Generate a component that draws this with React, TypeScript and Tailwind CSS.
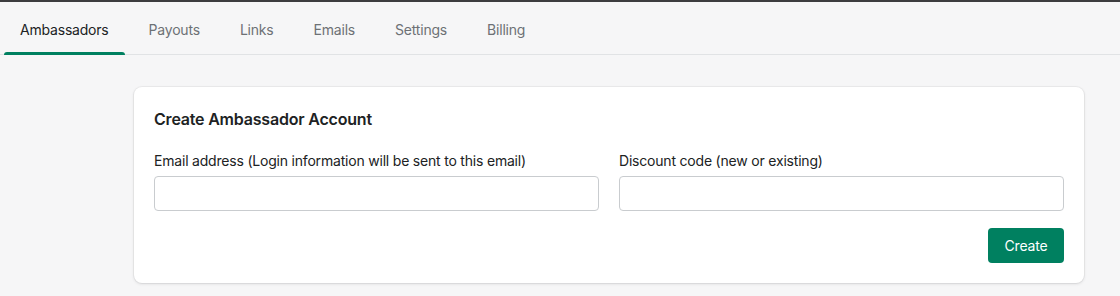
import { useState } from "react";

const TABS = ["Ambassadors", "Payouts", "Links", "Emails", "Settings", "Billing"];

export default function App() {
  const [active, setActive] = useState("Ambassadors");
  const [email, setEmail] = useState("");
  const [code, setCode] = useState("");

  return (
    <div
      className="min-h-[296px] w-[1120px] bg-[#f6f6f7] border-t-2 border-[#3d3d3f] text-[#202223] tracking-[-0.2px]"
      style={{ fontFamily: "Inter, 'Noto Sans', sans-serif" }}
    >
      {/* ── Tabs ── */}
      <div className="flex gap-2 pl-1 border-b border-[#e1e3e5] h-[53px]">
        {TABS.map((tab) => (
          <button
            key={tab}
            onClick={() => setActive(tab)}
            className={
              "relative px-4 pt-1 text-sm leading-none " +
              (active === tab ? "text-[#202223]" : "text-[#6d7175]")
            }
          >
            {tab}
            {active === tab && (
              <span className="absolute left-0 right-0 -bottom-px h-[3px] rounded-t bg-[#008060]" />
            )}
          </button>
        ))}
      </div>

      {/* ── Card ── */}
      <div className="pl-[134px] pr-[36px] pt-[32px]">
        <div className="bg-white rounded-lg shadow-[0_0_0_1px_rgba(63,63,68,0.05),0_1px_3px_0_rgba(63,63,68,0.15)] px-5 pt-[22px] pb-5">
          <h2 className="text-base font-semibold leading-5">Create Ambassador Account</h2>

          <div className="grid grid-cols-2 gap-5 mt-[22px]">
            <label className="flex flex-col">
              <span className="text-sm leading-5 mb-[5px]">Email address (Login information will be sent to this email)</span>
              <input
                value={email}
                onChange={(e) => setEmail(e.target.value)}
                className="h-[35px] rounded border border-[#c9cccf] px-3 text-sm outline-none"
              />
            </label>
            <label className="flex flex-col">
              <span className="text-sm leading-5 mb-[5px]">Discount code (new or existing)</span>
              <input
                value={code}
                onChange={(e) => setCode(e.target.value)}
                className="h-[35px] rounded border border-[#c9cccf] px-3 text-sm outline-none"
              />
            </label>
          </div>

          <div className="flex justify-end mt-[17px]">
            <button className="h-[35px] w-[76px] rounded bg-[#008060] text-white text-sm">Create</button>
          </div>
        </div>
      </div>
    </div>
  );
}
